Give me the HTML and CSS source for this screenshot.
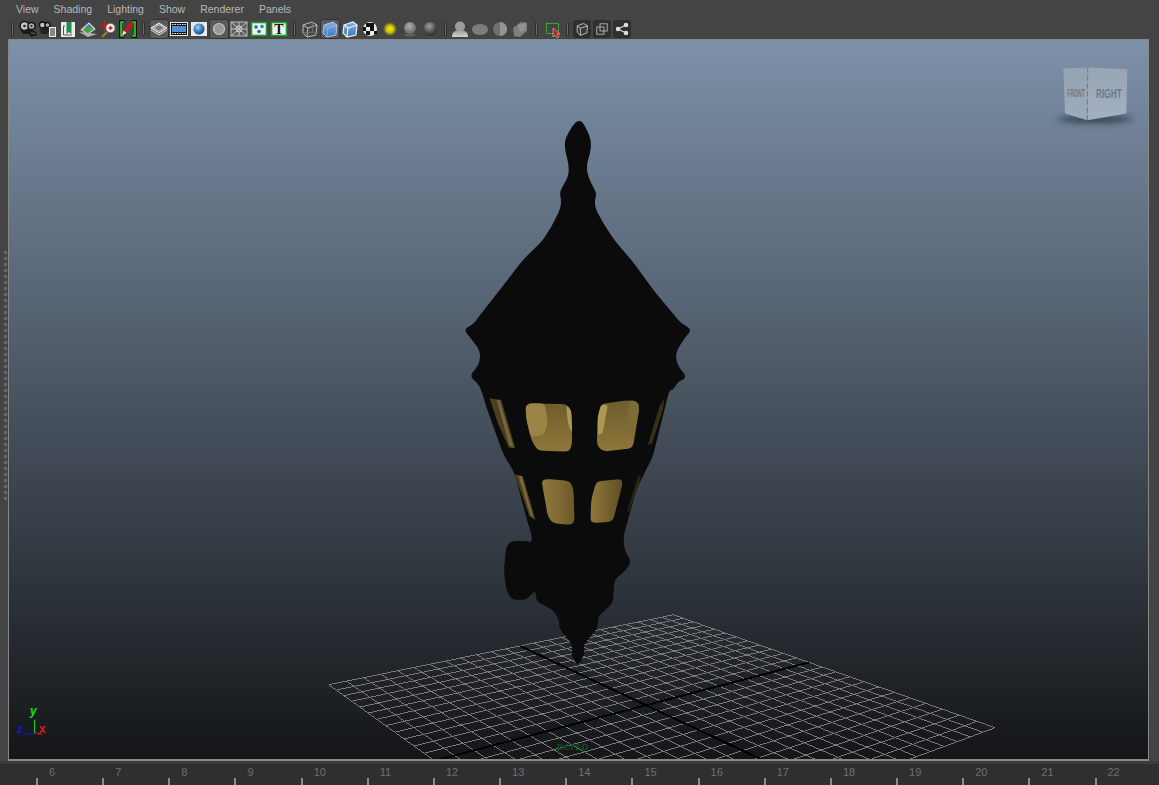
FILE: index.html
```
<!DOCTYPE html>
<html lang="en">
<head>
<meta charset="utf-8">
<title>Viewport</title>
<link rel="stylesheet" href="styles.css">
</head>
<body>
<svg class="defs" aria-hidden="true">
  <defs>
    <radialGradient id="gBlue" cx=".4" cy=".35" r=".7"><stop offset="0" stop-color="#a9d2f2"/><stop offset=".5" stop-color="#3f83c4"/><stop offset="1" stop-color="#123f78"/></radialGradient>
    <radialGradient id="gGray" cx=".45" cy=".35" r=".7"><stop offset="0" stop-color="#b0b0b0"/><stop offset="1" stop-color="#5e5e5e"/></radialGradient>
    <radialGradient id="gDark" cx=".45" cy=".3" r=".75"><stop offset="0" stop-color="#a0a0a0"/><stop offset=".6" stop-color="#4e4e4e"/><stop offset="1" stop-color="#222"/></radialGradient>
    <radialGradient id="gYellow"><stop offset="0" stop-color="#f6ee00"/><stop offset=".5" stop-color="#c2bc00"/><stop offset="1" stop-color="#444" stop-opacity="0"/></radialGradient>
    <linearGradient id="gCube" x1="0" y1="0" x2="0" y2="1"><stop offset="0" stop-color="#7fb2e4"/><stop offset="1" stop-color="#3f78b8"/></linearGradient>
    <linearGradient id="gBust" x1="0" y1="0" x2="0" y2="1"><stop offset="0" stop-color="#9a9a9a"/><stop offset="1" stop-color="#d0d0d0"/></linearGradient>
    <linearGradient id="gW1" x1="0" y1="0" x2="0" y2="1"><stop offset="0" stop-color="#6f5d2e"/><stop offset="1" stop-color="#8f773a"/></linearGradient>
    <linearGradient id="gW3" x1="0" y1="0" x2="1" y2="0"><stop offset="0" stop-color="#92793d"/><stop offset=".6" stop-color="#7c6732"/><stop offset="1" stop-color="#6a5829"/></linearGradient>
    <linearGradient id="gW4" x1="0" y1="0" x2="1" y2="0"><stop offset="0" stop-color="#8f773a"/><stop offset="1" stop-color="#5f4f26"/></linearGradient>
    <linearGradient id="gNavL" x1="0" y1="0" x2="0" y2="1"><stop offset="0" stop-color="#94a3b5"/><stop offset="1" stop-color="#9dabbb"/></linearGradient>
    <linearGradient id="gNavR" x1="0" y1="0" x2="0" y2="1"><stop offset="0" stop-color="#97a5b7"/><stop offset="1" stop-color="#a3b0c0"/></linearGradient>
    <filter id="soft" x="-30%" y="-100%" width="160%" height="300%"><feGaussianBlur stdDeviation="3"/></filter>
    <filter id="blur1" x="-20%" y="-20%" width="140%" height="140%"><feGaussianBlur stdDeviation=".6"/></filter>
  </defs>
</svg>
<div class="app">
  <header class="top">
    <nav class="menu">
      <span>View</span><span>Shading</span><span>Lighting</span><span>Show</span><span>Renderer</span><span>Panels</span>
    </nav>
    <div class="toolbar">
      <i class="grip w-12"></i>
      <span class="tool"><svg viewBox="0 0 20 20"><circle cx="6.500" cy="7" r="4.400" fill="#c4c4c4" stroke="#111" stroke-width="1.500"/><circle cx="13.500" cy="7" r="3.600" fill="#a8a8a8" stroke="#111" stroke-width="1.500"/><circle cx="6.500" cy="7" r="1.300" fill="#222"/><circle cx="13.500" cy="7" r="1" fill="#222"/><path d="M3 11h11l4 2 1 3-6 2-2-3H5z" fill="#1a1a1a"/><path d="M13 14l4 .5" stroke="#777"/></svg></span>
      <span class="tool"><svg viewBox="0 0 20 20"><circle cx="4.500" cy="6" r="3" fill="#c0c0c0" stroke="#111" stroke-width="1.300"/><circle cx="9.500" cy="6" r="2.500" fill="#a8a8a8" stroke="#111" stroke-width="1.300"/><path d="M2 9h9v4l-2 2H3z" fill="#222"/><rect x="11" y="8" width="7" height="10" fill="#eee"/><path d="M12 10h5M12 12h5M12 14h5M12 16h5" stroke="#222"/></svg></span>
      <span class="tool"><svg viewBox="0 0 20 20"><rect x="3" y="3" width="14" height="15" fill="#ececec"/><path d="M8.500 3h5v12l-2.500-2-2.500 2z" fill="#1e8f4c"/><path d="M7 7H5.500v9H14" fill="none" stroke="#555"/></svg></span>
      <span class="tool"><svg viewBox="0 0 20 20"><path d="M2 11l9-8 7 7-8 6z" fill="#ddd" stroke="#666"/><path d="M4.500 11l6.500-6 5 5-6 4.500z" fill="#4ea04a"/><path d="M7.500 8.500l3.500-3.500 3 3z" fill="#3d7fd0"/><path d="M1 13l9 5 9-3-9-1z" fill="#b4b4b4"/></svg></span>
      <span class="tool"><svg viewBox="0 0 20 20"><path d="M7 3v9M3 7h8" stroke="#c8191f" stroke-width="1.300"/><path d="M7 1l2 2.500H5zM7 13l2-2.500H5zM1 7l2.500 2V5z" fill="#c8191f"/><circle cx="12.500" cy="9" r="4.600" fill="#eee" stroke="#777"/><path d="M10.500 9h4M12.500 7v4" stroke="#c8191f" stroke-width="1.400"/><path d="M9 13l-5 5" stroke="#a6763c" stroke-width="2"/></svg></span>
      <span class="tool"><svg viewBox="0 0 20 20"><path d="M6.500 2.500H2.500v15h4M13.500 2.500h4v15h-4" fill="none" stroke="#111" stroke-width="3"/><path d="M6 3H3v14h3M14 3h3v14h-3" fill="none" stroke="#19e619" stroke-width="1.600"/><path d="M13 2l3.500 3-8 9-4 1.500 1-4z" fill="#b32024"/><path d="M5.500 11.500l3 2.500-4.500 2.500z" fill="#eee"/></svg></span>
      <i class="grip w-11"></i>
      <span class="tool on"><svg viewBox="0 0 20 20"><path d="M10 4l8 5-8 5-8-5z" fill="#aaa" stroke="#eee"/><path d="M2 11l8 5 8-5" fill="none" stroke="#ddd"/><path d="M6 9l4-2.500L14 9l-4 2.500z" fill="#777"/></svg></span>
      <span class="tool"><svg viewBox="0 0 20 20"><rect x="1" y="3" width="18" height="14" fill="#e8e8e8"/><rect x="2" y="4" width="16" height="12" fill="#111"/><rect x="3" y="7" width="14" height="6" fill="#4f8fd0"/><path d="M3 5.500h14M3 14.500h14" stroke="#eee" stroke-dasharray="1.500 1"/></svg></span>
      <span class="tool"><svg viewBox="0 0 20 20"><rect x="2" y="3" width="16" height="14" fill="#e8e8e8"/><circle cx="10" cy="10" r="5.500" fill="url(#gBlue)"/></svg></span>
      <span class="tool on"><svg viewBox="0 0 20 20"><circle cx="10" cy="10" r="5.500" fill="#999" stroke="#c8c8c8" stroke-width="1.200"/></svg></span>
      <span class="tool"><svg viewBox="0 0 20 20"><rect x="2" y="3" width="16" height="14" fill="#5d5d5d" stroke="#bbb"/><path d="M2 3l16 14M18 3L2 17M10 3v14M2 10h16" stroke="#c8c8c8"/><circle cx="10" cy="10" r="3" fill="none" stroke="#ccc"/></svg></span>
      <span class="tool"><svg viewBox="0 0 20 20"><rect x="2.500" y="3.500" width="15" height="13" fill="#eef3ea" stroke="#1c9a34" stroke-width="1.600"/><circle cx="7" cy="8" r="1.800" fill="#2268a8"/><circle cx="13" cy="7.500" r="1.800" fill="#2a7fb8"/><circle cx="10" cy="12.500" r="1.800" fill="#2268a8"/></svg></span>
      <span class="tool"><svg viewBox="0 0 20 20"><rect x="2.500" y="3.500" width="15" height="13" fill="#f0f2ee" stroke="#1c9a34" stroke-width="1.600"/><text x="10" y="15" class="tool-t">T</text></svg></span>
      <i class="grip w-11"></i>
      <span class="tool"><svg viewBox="0 0 20 20"><path d="M3 6l9-3 5 3-1 10-9 2-4-4z" fill="none" stroke="#bbb"/><path d="M3 6l5 3 9-3M8 9l-1 9" fill="none" stroke="#bbb"/><path d="M3 14l10-1 3 3M12 3l1 10" fill="none" stroke="#777"/></svg></span>
      <span class="tool on"><svg viewBox="0 0 20 20"><path d="M4 6l9-3 4 3-1 10-9 2-4-4z" fill="url(#gCube)" stroke="#a8c8ea"/><path d="M4 6l4 3 9-3M8 9l-1 9" fill="none" stroke="#9fc4ea" stroke-opacity=".6"/></svg></span>
      <span class="tool"><svg viewBox="0 0 20 20"><path d="M4 6l9-3 4 3-1 10-9 2-4-4z" fill="url(#gCube)" stroke="#eef" stroke-width="1.200"/><path d="M4 6l4 3 9-3M8 9l-1 9" fill="none" stroke="#eef" stroke-width="1.200"/></svg></span>
      <span class="tool"><svg viewBox="0 0 20 20"><circle cx="10" cy="10" r="7" fill="#eee"/><path d="M6 4h4v4H6zM14 4v4h-4V4zM3 8h3v4H3zM10 8h4v4h-4zM6 12h4v4H6zM14 12h3v3h-3z" fill="#111"/></svg></span>
      <span class="tool"><svg viewBox="0 0 20 20"><circle cx="10" cy="10" r="8" fill="url(#gYellow)"/></svg></span>
      <span class="tool"><svg viewBox="0 0 20 20"><ellipse cx="10" cy="16" rx="6" ry="1.500" fill="#5e5e5e" filter="url(#blur1)"/><circle cx="10" cy="9" r="6" fill="url(#gGray)"/></svg></span>
      <span class="tool"><svg viewBox="0 0 20 20"><circle cx="10" cy="10" r="7" fill="url(#gDark)"/></svg></span>
      <i class="grip w-10"></i>
      <span class="tool"><svg viewBox="0 0 20 20"><circle cx="10" cy="7.500" r="5" fill="#9c9c9c" filter="url(#blur1)"/><path d="M2 18c0-5 3-7 8-7s8 2 8 7z" fill="url(#gBust)"/></svg></span>
      <span class="tool"><svg viewBox="0 0 20 20"><ellipse cx="10" cy="10.500" rx="8" ry="5.500" fill="#7c7c7c" filter="url(#blur1)"/><path d="M3 10h14" stroke="#8f8f8f" stroke-width="3" filter="url(#blur1)"/></svg></span>
      <span class="tool"><svg viewBox="0 0 20 20"><circle cx="10" cy="10" r="7" fill="#6f6f6f" filter="url(#blur1)"/><path d="M10 3a7 7 0 0 1 0 14z" fill="#949494" filter="url(#blur1)"/></svg></span>
      <span class="tool"><svg viewBox="0 0 20 20"><path d="M3 9l8-6 6 1v8l-7 6-6-1z" fill="#7e7e7e" filter="url(#blur1)"/><path d="M8 6l8-2-1 7-5 2z" fill="#929292" filter="url(#blur1)"/></svg></span>
      <i class="grip w-13"></i>
      <span class="tool"><svg viewBox="0 0 20 20"><rect x="3.500" y="4.500" width="12" height="10" fill="none" stroke="#3bd13b" stroke-dasharray="2 1"/><path d="M10 9v9l2-2 2 3 2-1-2-3h3z" fill="#c8191f" stroke="#e0e0e0" stroke-width=".5"/></svg></span>
      <i class="grip w-9"></i>
      <span class="tool dark"><svg viewBox="0 0 20 20"><path d="M4 6l8-3 5 3-1 9-8 3-4-4z" fill="#3a3a3a" stroke="#c4c4c4" stroke-width="1.100"/><path d="M4 6l4 3 9-3M8 9v9" fill="none" stroke="#c4c4c4" stroke-width="1.100"/></svg></span>
      <span class="tool dark"><svg viewBox="0 0 20 20"><rect x="7.500" y="3.500" width="9" height="9" fill="none" stroke="#bbb" stroke-width="1.100"/><rect x="3.500" y="7.500" width="9" height="9" fill="none" stroke="#bbb" stroke-width="1.100"/></svg></span>
      <span class="tool dark"><svg viewBox="0 0 20 20"><path d="M5 10l10-5M5 10l10 5" stroke="#ddd" stroke-width="1.400"/><circle cx="5" cy="10" r="2.800" fill="#ddd"/><circle cx="15" cy="5" r="2.800" fill="#ddd"/><circle cx="15" cy="15" r="2.800" fill="#ddd"/></svg></span>
    </div>
  </header>
  <main class="work">
    <aside class="rail"><i class="rail-dots"></i></aside>
    <section class="viewport">
      <svg class="scene" viewBox="9 40 1140 719" role="img" aria-label="Lantern in perspective view">
        <g id="grid" class="grid"></g>
        <g id="axes" class="grid-axes"></g>
        <path class="lantern smooth" data-r="5" d="M578.300 120L573.300 125L566.700 136.700L565 143.300L566 151.700L569 163.300L569.300 175L565 183.300L560 191.700L561.700 200L561 208.300L551.700 226.700L543.300 240L523.300 260L500 290L476.700 320L474 324L468 326.700L465 330.700L470 336.700L480 350L480.700 358.300L478.300 366.700L471.700 373.300L471.700 378.300L478.300 383.300L481.700 390L486.700 406.700L503.300 453.300L515 473.300L528.300 523.300L532.700 536.700L531.700 543L528.300 541L511.700 541L506.700 546.700L504.300 570L506.700 590L511.700 600L526.700 600L536 590L536.700 601.700L553.300 610L560 620L559.300 628.300L573.300 645L571.700 655L578.300 666.700L585 655L584 645L598.300 628.300L598.300 616.700L613.300 603.300L615 580L626.700 570L631.700 561.700L625 550L624 536.700L636.700 490L653.300 456.700L670 390L674 390L678.300 381.700L685 379.300L686 375L681.700 370L676.700 361.700L676.700 351.700L685 338.300L691.700 330.700L688.300 326.700L681.700 323.300L656.700 293.300L633.300 261.700L615 240L605 225L595.700 208.300L595.300 200L597.300 193.300L591.700 183.300L587.700 173.300L587.300 163.300L590.700 153.300L591.700 143.300L590 135L583.300 121.700Z"/>
        <path class="smooth" data-r="5" fill="url(#gW1)" d="M526 406L530 403.300L566.700 404L571.700 410L572.700 443.300L570 451.700L538.300 450.700L531.700 440L526.700 418.300Z"/>
        <path class="smooth" data-r="4" fill="#9a8448" d="M526 406L530 403.300L545.300 403.500L548.300 423.300L544 435L531 436.700L526.700 418.300Z"/>
        <path class="smooth" data-r="3" fill="#ad9855" d="M566.700 405L571.700 410L572.700 433L569.300 426.700L567.500 415Z"/>
        <path class="smooth" data-r="5" fill="url(#gW1)" d="M598.300 416.700L601.700 404L630 400L638.300 401.700L640 408.300L633.300 448.300L603.300 451.700L597.300 445Z"/>
        <path class="smooth" data-r="3" fill="#ad9855" d="M598.300 435L603 434L608.300 405L601.700 404L598.300 416.700Z"/>
        <path class="smooth" data-r="4" fill="#7e6b35" d="M630 400L638.300 401.700L640 408.300L633.300 438.300L625 433.300L628.300 413.300Z"/>
        <path class="smooth" data-r="5" fill="url(#gW3)" d="M542 480.700L546.700 479L570 481L574 488.300L575 521.700L571.700 525L553.300 523.300L548.300 516.700Z"/>
        <path class="smooth" data-r="5" fill="url(#gW4)" d="M591.700 500L596.700 481.700L621.700 479L623.300 483.300L613.300 521.700L593.300 523.300L591 520Z"/>
        <path fill="#4a3f20" d="M490 398.300L501.700 400L515.700 448.300L509.300 447.700L498.300 423.300Z"/>
        <path fill="#76653a" d="M497 400L500 400L514 447L510 446Z"/>
        <path fill="#4a3f20" d="M515 474.300L523.300 476L536 520L530 516.700Z"/>
        <path fill="#7c6a38" d="M519 476L522 476L534 518L531 515Z"/>
        <path fill="#3a3018" d="M665 398.300L660 406.700L648.300 445L652.700 443.300L663.300 410Z"/>
        <path fill="#2a2410" d="M641.700 475L638.300 476.700L627.300 513.300L629.300 511.700L640 483.300Z"/>
        <ellipse class="nav-shadow" cx="1096" cy="119" rx="38" ry="3.500" filter="url(#soft)"/>
        <path fill="url(#gNavL)" d="M1064.300 68.300L1088.700 67.300L1088.300 120L1066 113.300Z"/>
        <path fill="url(#gNavR)" d="M1088.700 67.300L1128.300 69L1127.300 113.300L1088.300 120Z"/>
        <path class="nav-edge" d="M1088.700 67.300L1088.300 120"/>
        <text class="nav-t" transform="translate(1068 97) scale(.47 1)">FRONT</text>
        <text class="nav-t nav-r" transform="translate(1097 98) scale(.64 1)">RIGHT</text>
        <path class="ax-y" d="M34.500 720V733.500"/>
        <path class="ax-z" d="M23 734H35"/>
        <path class="ax-x" d="M35 733.500H39M38 734.500H42"/>
        <text class="ax-label y" x="30" y="715">y</text>
        <text class="ax-label z" x="17" y="733">z</text>
        <text class="ax-label x" x="39" y="733">x</text>
        <text class="persp" x="557" y="750" textLength="32" lengthAdjust="spacingAndGlyphs">persp</text>
      </svg>
    </section>
    <aside class="rail rail-r"></aside>
  </main>
  <footer class="timeline">
    <span class="frame">6</span><span class="frame">7</span><span class="frame">8</span><span class="frame">9</span><span class="frame">10</span><span class="frame">11</span><span class="frame">12</span><span class="frame">13</span><span class="frame">14</span><span class="frame">15</span><span class="frame">16</span><span class="frame">17</span><span class="frame">18</span><span class="frame">19</span><span class="frame">20</span><span class="frame">21</span><span class="frame">22</span>
  </footer>
</div>
<script src="scene.js"></script>
</body>
</html>
```
FILE: styles.css
```
* { box-sizing: border-box; }
html, body { margin: 0; height: 100%; overflow: hidden; background: #444; }
.defs { position: absolute; width: 0; height: 0; }
.app { height: 100vh; display: flex; flex-direction: column; font-family: "Liberation Sans", Arial, sans-serif; }

.top { height: 39px; flex: none; background: #444; }
.menu { height: 18px; padding-left: 16px; display: flex; gap: 15px; align-items: center; font-size: 10.5px; color: #b8b8b8; }
.toolbar { height: 21px; padding-left: 6px; display: flex; align-items: center; }
.tool { width: 20px; height: 20px; display: flex; align-items: center; justify-content: center; flex: none; }
.tool svg { width: 20px; height: 20px; display: block; }
.tool.on { background: #5a5a5a; border-radius: 3px; box-shadow: inset 0 0 0 1px #333; }
.tool.dark svg { background: #2f2f2f; border-radius: 3px; width: 18px; height: 18px; padding: 1px; }
.tool-t { font: bold 14px "Liberation Serif", serif; fill: #111; text-anchor: middle; }
.grip { display: block; flex: none; height: 16px; }
.grip::before { content: ""; display: block; width: 3px; height: 14px; margin: 1px auto; background: #6c6c6c; box-shadow: inset 0 0 0 1px #2c2c2c; border-radius: 1px; }
.w-12 { width: 12px; }
.w-11 { width: 11px; }
.w-10 { width: 10px; }
.w-13 { width: 13px; }
.w-9 { width: 9px; }

.work { flex: 1; min-height: 0; display: flex; }
.rail { width: 8px; flex: none; background: #444; display: flex; align-items: center; justify-content: flex-end; padding: 0 1px 48px 0; }
.rail-r { width: 10px; padding: 0; }
.rail-dots { display: block; width: 3px; height: 250px; background: repeating-linear-gradient(to bottom, #686868 0 3px, #444 3px 6px); }
.viewport { flex: 1; min-width: 0; border: 1px solid #878787; border-bottom-width: 2px; background: linear-gradient(to bottom, #7d91a9 0%, #141618 100%); overflow: hidden; }
.scene { display: block; width: 100%; height: 100%; }

.grid line { stroke: #787878; stroke-width: 1; shape-rendering: crispEdges; }
.grid-axes line { stroke: #000; stroke-width: 2; shape-rendering: crispEdges; }
.lantern { fill: #0b0b0b; }
.nav-shadow { fill: #1d2630; opacity: .75; }
.nav-edge { stroke: #6a7786; stroke-width: 1; stroke-dasharray: 5 3; fill: none; }
.nav-t { font: bold 11px "Liberation Sans", sans-serif; fill: #6d7988; }
.nav-r { font-size: 13px; }
.ax-y, .ax-z, .ax-x { fill: none; stroke-width: 1; }
.ax-y { stroke: #16e016; }
.ax-z { stroke: #1212e0; }
.ax-x { stroke: #e01212; }
.ax-label { font: bold 12px "Liberation Sans", sans-serif; }
.ax-label.y { fill: #12e012; font-style: italic; }
.ax-label.z { fill: #1212f0; }
.ax-label.x { fill: #f01212; }
.persp { font: bold 11px "Liberation Sans", sans-serif; fill: #0e4a20; }

.timeline { height: 24px; flex: none; padding-left: 37px; display: flex; background: #2f2f2f; border-top: 3px solid #3c3c3c; overflow: hidden; }
.frame { width: 66.17px; flex: none; position: relative; padding: 2px 0 0 12px; font-size: 11px; line-height: 13px; color: #707070; }
.frame::before { content: ""; position: absolute; left: -1px; bottom: 0; width: 2px; height: 7px; background: #8c8c8c; }
```
FILE: scene.js
```
(function () {
  var NS = "http://www.w3.org/2000/svg";

  /* Floor grid: 24 x 24 cells mapped through a perspective homography. */
  var P = [[329, 685], [674, 615], [996, 728], [595, 876]];
  var DIV = 24;
  var x0 = P[0][0], y0 = P[0][1], x1 = P[1][0], y1 = P[1][1];
  var x2 = P[2][0], y2 = P[2][1], x3 = P[3][0], y3 = P[3][1];
  var sx = x0 - x1 + x2 - x3, sy = y0 - y1 + y2 - y3;
  var dx1 = x1 - x2, dx2 = x3 - x2, dy1 = y1 - y2, dy2 = y3 - y2;
  var den = dx1 * dy2 - dx2 * dy1;
  var g = (sx * dy2 - dx2 * sy) / den, h = (dx1 * sy - sx * dy1) / den;
  var a = x1 - x0 + g * x1, b = x3 - x0 + h * x3, c = x0;
  var d = y1 - y0 + g * y1, e = y3 - y0 + h * y3, f = y0;
  function map(u, v) {
    var w = g * u + h * v + 1;
    return [(a * u + b * v + c) / w, (d * u + e * v + f) / w];
  }
  function add(parent, p, q) {
    var l = document.createElementNS(NS, "line");
    l.setAttribute("x1", p[0]); l.setAttribute("y1", p[1]);
    l.setAttribute("x2", q[0]); l.setAttribute("y2", q[1]);
    parent.appendChild(l);
  }
  var grid = document.getElementById("grid"), axes = document.getElementById("axes");
  for (var i = 0; i <= DIV; i++) {
    var t = i / DIV;
    add(i === DIV / 2 ? axes : grid, map(t, 0), map(t, 1));
    add(i === DIV / 2 ? axes : grid, map(0, t), map(1, t));
  }

  /* Round the corners of the traced outlines. */
  function toward(p, q, r) {
    var dx = q[0] - p[0], dy = q[1] - p[1], len = Math.sqrt(dx * dx + dy * dy);
    var k = Math.min(r, len / 2) / (len || 1);
    return [p[0] + dx * k, p[1] + dy * k];
  }
  var shapes = document.querySelectorAll(".smooth");
  for (var s = 0; s < shapes.length; s++) {
    var el = shapes[s], r = parseFloat(el.getAttribute("data-r"));
    var nums = el.getAttribute("d").match(/[\d.]+/g).map(Number), pts = [];
    for (var n = 0; n < nums.length; n += 2) pts.push([nums[n], nums[n + 1]]);
    var out = "";
    for (var k = 0; k < pts.length; k++) {
      var p = pts[k], prev = pts[(k + pts.length - 1) % pts.length], next = pts[(k + 1) % pts.length];
      var from = toward(p, prev, r), to = toward(p, next, r);
      out += (k ? "L" : "M") + from[0] + " " + from[1] + "Q" + p[0] + " " + p[1] + " " + to[0] + " " + to[1];
    }
    el.setAttribute("d", out + "Z");
  }
})();
```
